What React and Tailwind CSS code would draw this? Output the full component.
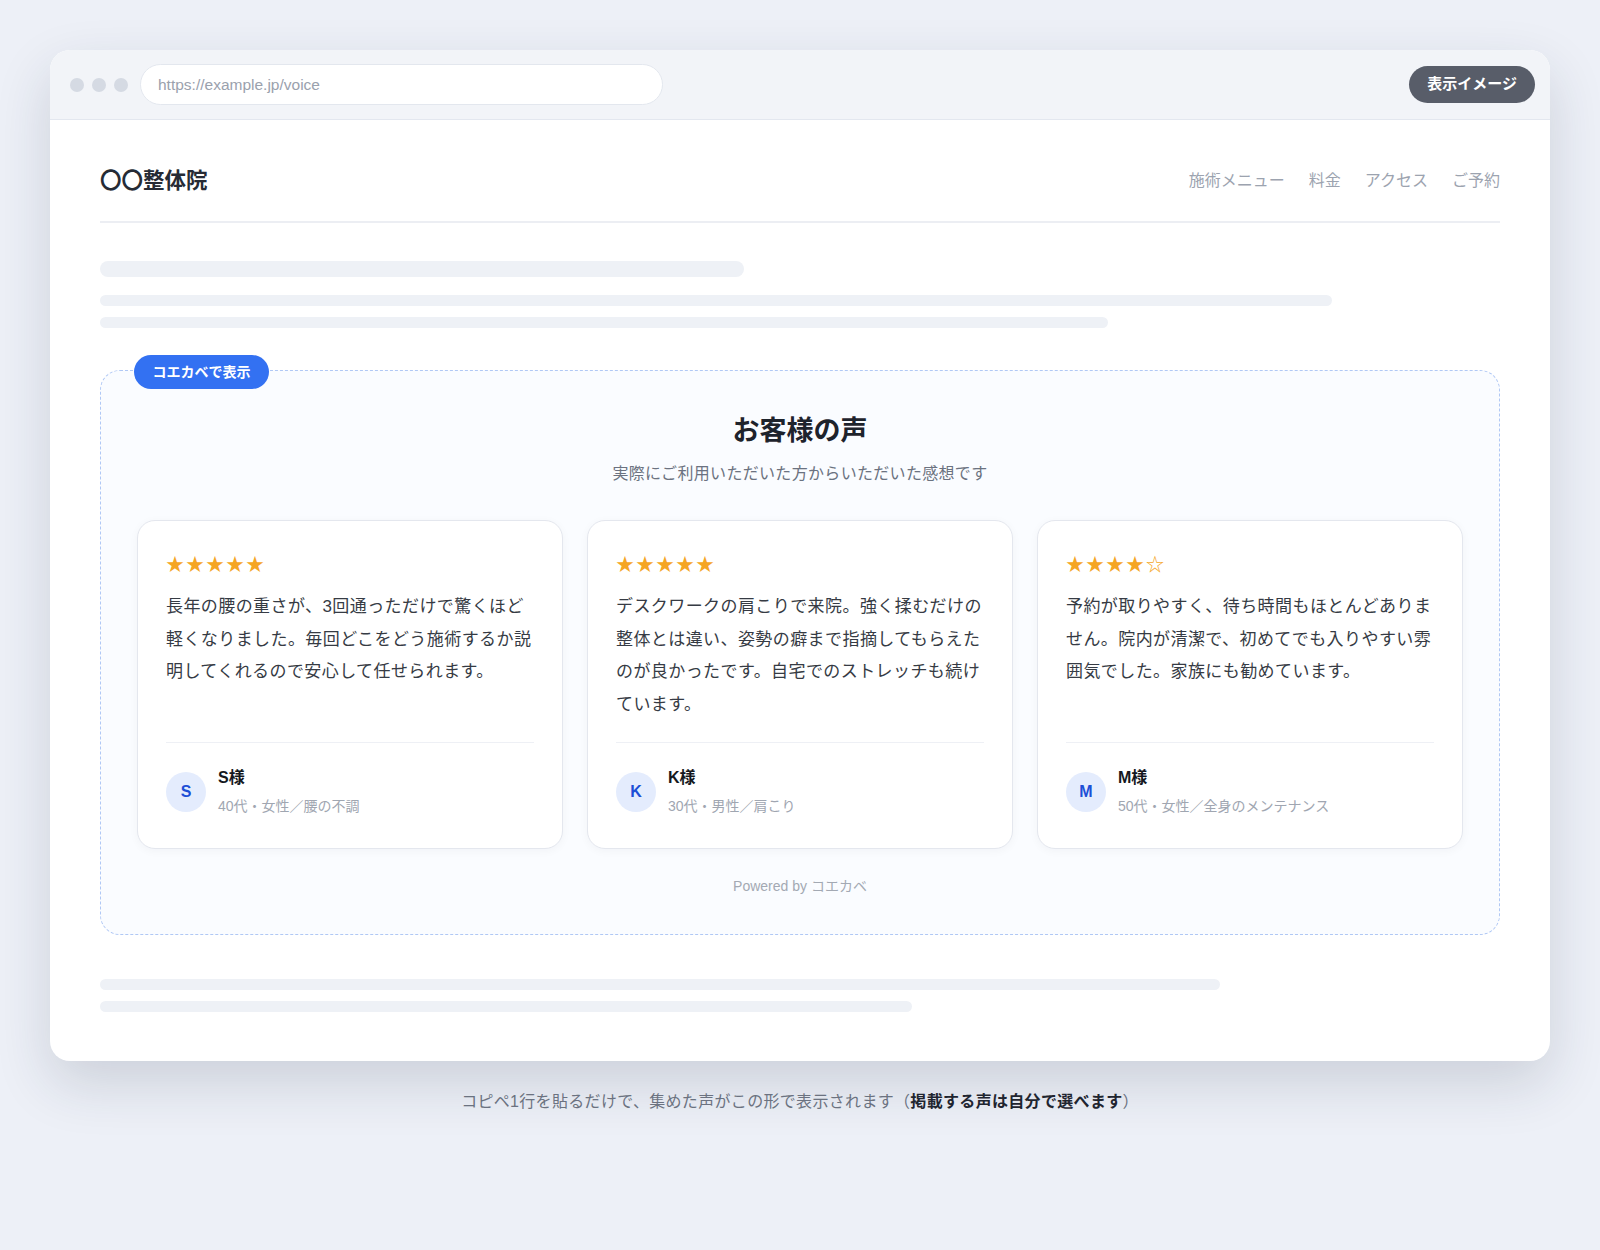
import React from "react";

const FONT = { fontFamily: '"Liberation Sans", "Noto Sans CJK JP", sans-serif' };

const reviews = [
  {
    stars: "★★★★★",
    text: "長年の腰の重さが、3回通っただけで驚くほど軽くなりました。毎回どこをどう施術するか説明してくれるので安心して任せられます。",
    initial: "S",
    name: "S様",
    meta: "40代・女性／腰の不調",
  },
  {
    stars: "★★★★★",
    text: "デスクワークの肩こりで来院。強く揉むだけの整体とは違い、姿勢の癖まで指摘してもらえたのが良かったです。自宅でのストレッチも続けています。",
    initial: "K",
    name: "K様",
    meta: "30代・男性／肩こり",
  },
  {
    stars: "★★★★☆",
    text: "予約が取りやすく、待ち時間もほとんどありません。院内が清潔で、初めてでも入りやすい雰囲気でした。家族にも勧めています。",
    initial: "M",
    name: "M様",
    meta: "50代・女性／全身のメンテナンス",
  },
];

function Card({ r }) {
  return (
    <div className="flex flex-col rounded-[18px] border border-[#e4e7ee] bg-white px-7 pt-[30px] pb-[31px] shadow-[0_2px_10px_rgba(15,23,42,0.04)]">
      <div className="text-[18px] leading-[28px] tracking-[2px] text-[#f5a524]">{r.stars}</div>
      <p className="mt-3 flex-1 text-[17px] leading-[1.92] tracking-[0.42px] text-[#363b44]">{r.text}</p>
      <div className="mt-[20px] flex items-center gap-3 border-t border-[#eef0f5] pt-[24px]">
        <div className="flex h-10 w-10 items-center justify-center rounded-full bg-[#e4ecfd] text-[16px] font-bold text-[#1d4fd6]">
          {r.initial}
        </div>
        <div className="flex flex-col">
          <div className="text-[16px] font-bold leading-[22px] text-[#15181e]">{r.name}</div>
          <div className="mt-[6px] text-[14px] leading-[22px] text-[#a0a6b1]">{r.meta}</div>
        </div>
      </div>
    </div>
  );
}

export default function App() {
  return (
    <div style={FONT} className="min-h-[1250px] w-full bg-[#edf0f7] pt-[50px] pb-10">
      <div className="mx-auto w-[1500px] overflow-hidden rounded-[20px] bg-white shadow-[0_22px_55px_rgba(30,41,70,0.16)]">
        {/* browser bar */}
        <div className="flex h-[70px] items-center border-b border-[#e3e7ef] bg-[#f2f4f8] pl-5 pr-[15px]">
          <div className="flex gap-2">
            <span className="h-3.5 w-3.5 rounded-full bg-[#d5dae3]" />
            <span className="h-3.5 w-3.5 rounded-full bg-[#d5dae3]" />
            <span className="h-3.5 w-3.5 rounded-full bg-[#d5dae3]" />
          </div>
          <div className="ml-3 flex h-[41px] w-[523px] items-center rounded-full border border-[#e3e7ee] bg-white pl-[17px] text-[15.5px] text-[#9aa1ad]">
            https://example.jp/voice
          </div>
          <div className="ml-auto flex h-[37px] items-center rounded-full bg-[#585d69] px-[18px] text-[15px] font-bold text-white">
            表示イメージ
          </div>
        </div>

        {/* page content */}
        <div className="px-[50px] pb-[49px]">
          <div className="mt-[45px] box-content flex h-8 items-center justify-between border-b-2 border-[#eceef3] pb-[24px]">
            <div className="text-[21.5px] font-bold text-[#262b35]">〇〇整体院</div>
            <nav className="flex gap-6 text-[16px] text-[#9ca3af]">
              <span>施術メニュー</span>
              <span>料金</span>
              <span>アクセス</span>
              <span>ご予約</span>
            </nav>
          </div>

          <div className="mt-[38px] flex flex-col">
            <div className="h-4 w-[46%] rounded-full bg-[#eef1f6]" />
            <div className="mt-[18px] h-[11px] w-[88%] rounded-full bg-[#eef1f6]" />
            <div className="mt-[11px] h-[11px] w-[72%] rounded-full bg-[#eef1f6]" />
          </div>

          {/* widget */}
          <div className="relative mt-[42px] rounded-[20px] border border-dashed border-[#b0c8f5] bg-[#fafcff] px-9 pt-[42px] pb-[38px]">
            <div className="absolute -top-[16px] left-[33px] flex h-[34px] items-center rounded-full bg-[#3371f2] px-[18.5px] text-[14px] font-bold text-white">
              コエカベで表示
            </div>
            <h2 className="text-center text-[27px] font-bold leading-[36px] text-[#1e232c]">お客様の声</h2>
            <p className="mt-[13px] text-center text-[16px] leading-6 tracking-[0.02em] text-[#6b7280]">
              実際にご利用いただいた方からいただいた感想です
            </p>
            <div className="mt-[34px] grid grid-cols-3 gap-6">
              {reviews.map((r) => (
                <Card key={r.name} r={r} />
              ))}
            </div>
            <div className="mt-[27px] text-center text-[14px] leading-5 text-[#a3a9b3]">Powered by コエカベ</div>
          </div>

          <div className="mt-[44px] flex flex-col">
            <div className="h-[11px] w-[80%] rounded-full bg-[#eef1f6]" />
            <div className="mt-[11px] h-[11px] w-[58%] rounded-full bg-[#eef1f6]" />
          </div>
        </div>
      </div>

      <p className="mt-[29px] text-center text-[16px] leading-6 tracking-[0.02em] text-[#6b7280]">
        コピペ1行を貼るだけで、集めた声がこの形で表示されます（<b className="font-bold text-[#1f2530]">掲載する声は自分で選べます</b>）
      </p>
    </div>
  );
}
